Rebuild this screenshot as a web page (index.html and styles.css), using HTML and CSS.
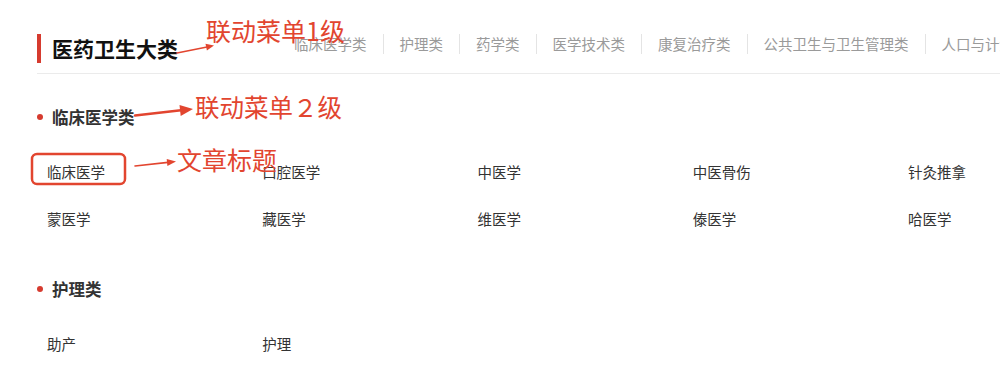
FILE: index.html
```html
<!DOCTYPE html>
<html lang="zh-CN">
<head>
<meta charset="utf-8">
<title>医药卫生大类</title>
<link rel="stylesheet" href="styles.css">
</head>
<body>
<div class="page">
  <div class="panel">
    <header class="head">
      <h1 class="title">医药卫生大类</h1>
      <nav class="tabs">
        <a class="tab">临床医学类</a>
        <a class="tab">护理类</a>
        <a class="tab">药学类</a>
        <a class="tab">医学技术类</a>
        <a class="tab">康复治疗类</a>
        <a class="tab">公共卫生与卫生管理类</a>
        <a class="tab">人口与计划生育类</a>
      </nav>
    </header>

    <section class="group">
      <h2 class="group-title">临床医学类</h2>
      <ul class="items">
        <li>临床医学</li>
        <li>口腔医学</li>
        <li>中医学</li>
        <li>中医骨伤</li>
        <li>针灸推拿</li>
        <li>蒙医学</li>
        <li>藏医学</li>
        <li>维医学</li>
        <li>傣医学</li>
        <li>哈医学</li>
      </ul>
    </section>

    <section class="group">
      <h2 class="group-title">护理类</h2>
      <ul class="items">
        <li>助产</li>
        <li>护理</li>
      </ul>
    </section>
  </div>

  <div class="notes">
    <svg class="marks" width="1000" height="381" viewBox="0 0 1000 381">
      <line x1="177" y1="53" x2="207" y2="47" class="mk thin"/>
      <polygon points="214,45.5 206.9,50.5 205.5,43.7" class="mk-fill"/>
      <line x1="135" y1="115.5" x2="181" y2="110.3" class="mk thick"/>
      <polygon points="193,109 180.7,115.9 179.5,105" class="mk-fill"/>
      <line x1="135" y1="166" x2="168" y2="162.4" class="mk thin"/>
      <polygon points="176,161.5 167.4,166 166.7,159" class="mk-fill"/>
      <rect x="32" y="154" width="93" height="30" rx="5" class="mk box"/>
    </svg>
    <span class="note note-1">联动菜单1级</span>
    <span class="note note-2">联动菜单２级</span>
    <span class="note note-3">文章标题</span>
  </div>
</div>
</body>
</html>
```

FILE: styles.css
```css
html, body {
  margin: 0;
  padding: 0;
  background: #fff;
}

body {
  font-family: "Noto Sans CJK SC", "Noto Sans", sans-serif;
}

.page {
  position: relative;
  width: 1000px;
  height: 381px;
  overflow: hidden;
}

.panel {
  padding-left: 37px;
}

.head {
  display: flex;
  align-items: flex-start;
  padding-top: 34px;
  padding-bottom: 10px;
  border-bottom: 1px solid #ebebeb;
}

.title {
  flex-shrink: 0;
  margin: 0;
  border-left: 4px solid #d63b2f;
  padding-left: 11px;
  height: 29px;
  line-height: 29px;
  font-size: 21px;
  font-weight: 700;
  color: #111;
}

.tabs {
  display: flex;
  flex-shrink: 0;
  margin-left: 100px;
  white-space: nowrap;
}

.tab {
  flex-shrink: 0;
  padding: 0 16px;
  border-left: 1px solid #e4e4e4;
  font-size: 14.5px;
  line-height: 20px;
  color: #9a9a9a;
}

.tab:first-child {
  border-left: none;
}

.group {
  padding: 31px 0 17px;
}

.group-title {
  display: flex;
  align-items: center;
  margin: 0;
  font-size: 16.5px;
  line-height: 24px;
  font-weight: 700;
  color: #333;
}

.group-title::before {
  content: "";
  width: 6px;
  height: 6px;
  border-radius: 50%;
  background: #d63b2f;
  margin-right: 9px;
}

.items {
  list-style: none;
  margin: 33px 0 0;
  padding: 0 0 0 10px;
  display: grid;
  grid-template-columns: repeat(5, 215.25px);
  row-gap: 27px;
}

.items li {
  font-size: 14.5px;
  line-height: 20px;
  color: #333;
  white-space: nowrap;
}

/* annotation overlay */
.notes {
  position: absolute;
  left: 0;
  top: 0;
  width: 1000px;
  height: 381px;
  pointer-events: none;
}

.marks {
  position: absolute;
  left: 0;
  top: 0;
}

.mk {
  stroke: #e2452f;
  fill: none;
  stroke-linecap: round;
}

.thin {
  stroke-width: 1.6;
}

.thick {
  stroke-width: 2.6;
}

.box {
  stroke-width: 2.5;
}

.mk-fill {
  fill: #e2452f;
}

.note {
  position: absolute;
  color: #e2452f;
  font-size: 25px;
  line-height: 25px;
  font-weight: 400;
  white-space: nowrap;
}

.note-1 {
  left: 206px;
  top: 18px;
}

.note-2 {
  left: 195px;
  top: 94px;
  font-size: 24.5px;
}

.note-3 {
  left: 177px;
  top: 147px;
}
```
